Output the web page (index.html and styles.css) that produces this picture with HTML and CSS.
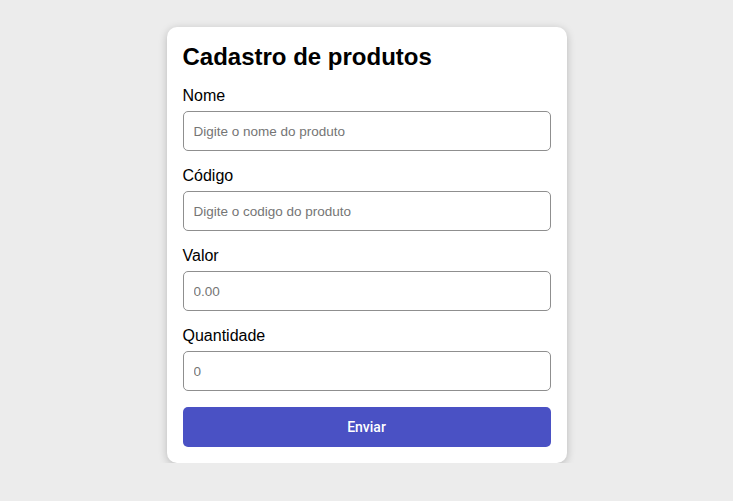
FILE: index.html
```html
<!DOCTYPE html>
<html lang="pt">
<head>
<meta charset="utf-8">
<title>Cadastro de produtos</title>
<link rel="stylesheet" href="styles.css">
</head>
<body>
<div class="page">
  <form class="card">
    <h1 class="title">Cadastro de produtos</h1>
    <label class="label" for="nome">Nome</label>
    <input class="input" id="nome" type="text" placeholder="Digite o nome do produto">
    <label class="label" for="codigo">Código</label>
    <input class="input" id="codigo" type="text" placeholder="Digite o codigo do produto">
    <label class="label" for="valor">Valor</label>
    <input class="input" id="valor" type="text" placeholder="0.00">
    <label class="label" for="qtd">Quantidade</label>
    <input class="input" id="qtd" type="text" placeholder="0">
    <button class="button" type="button">Enviar</button>
  </form>
</div>
</body>
</html>
```
FILE: styles.css
```css
html, body {
  margin: 0;
  padding: 0;
  background: #ececec;
  font-family: "Liberation Sans", Arial, sans-serif;
}
.page {
  display: flex;
  justify-content: center;
  padding-top: 27px;
}
.card {
  width: 368px;
  padding: 16px;
  background: #ffffff;
  border-radius: 10px;
  box-shadow: 0 2px 8px rgba(0, 0, 0, 0.22);
  display: flex;
  flex-direction: column;
}
.title {
  margin: 0 0 16px 0;
  font-size: 24px;
  font-weight: bold;
  color: #000;
}
.label {
  font-size: 16px;
  line-height: 18px;
  color: #000;
  margin-bottom: 6px;
}
.input {
  box-sizing: border-box;
  height: 40px;
  margin: 0 0 16px 0;
  padding: 0 10px;
  border: 1px solid #8f8f8f;
  border-radius: 5px;
  font-family: "Liberation Sans", Arial, sans-serif;
  font-size: 13.5px;
  color: #000;
  background: #fff;
}
.input::placeholder {
  color: #757575;
}
.button {
  height: 40px;
  border: none;
  border-radius: 5px;
  background: #4a51c4;
  color: #fff;
  font-family: Roboto, "Liberation Sans", sans-serif;
  font-size: 14px;
  font-weight: 500;
}
```
